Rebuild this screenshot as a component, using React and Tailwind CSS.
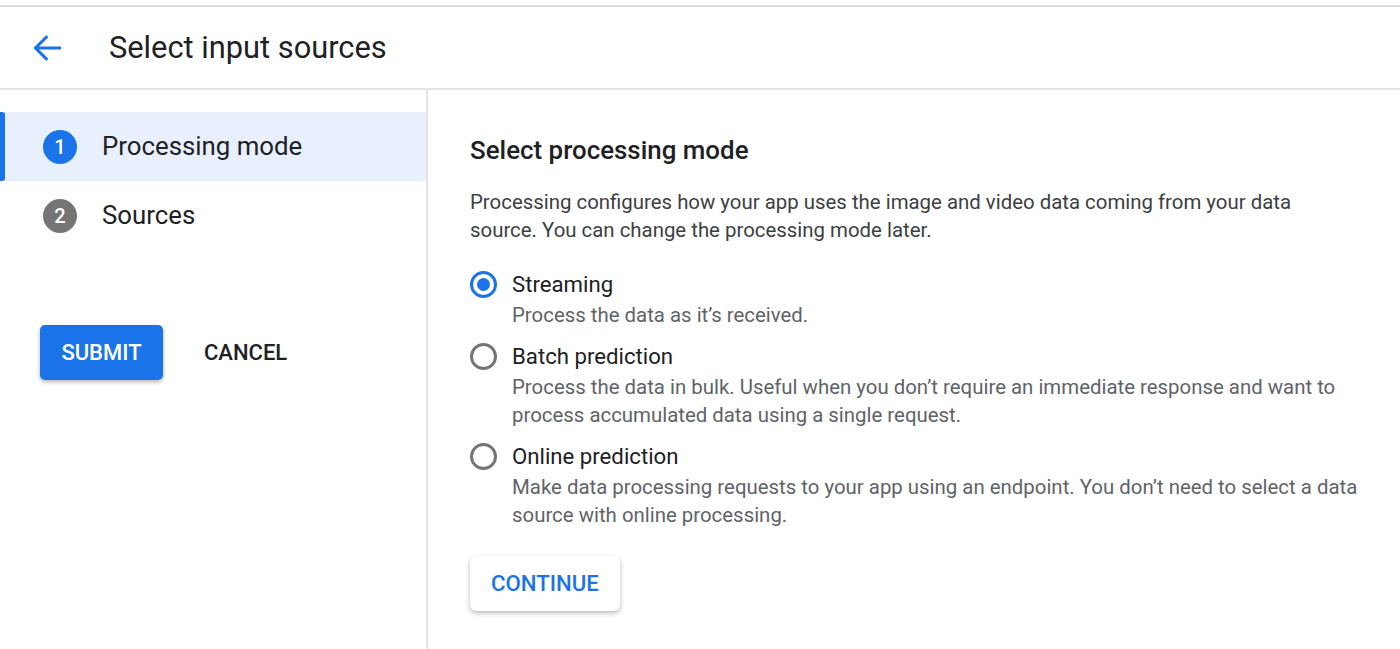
import React, { useState } from "react";

const modes = [
  {
    id: "streaming",
    label: "Streaming",
    desc: "Process the data as it’s received.",
  },
  {
    id: "batch",
    label: "Batch prediction",
    desc: "Process the data in bulk. Useful when you don’t require an immediate response and want to process accumulated data using a single request.",
  },
  {
    id: "online",
    label: "Online prediction",
    desc: "Make data processing requests to your app using an endpoint. You don’t need to select a data source with online processing.",
  },
];

function Step({ n, label, active }) {
  return (
    <div
      className={`relative flex h-[69px] items-center pl-[43px] ${
        active ? "bg-[#e8f0fe]" : ""
      }`}
    >
      {active && (
        <span className="absolute left-0 top-0 h-full w-[5px] rounded-r-[3px] bg-[#1a73e8]" />
      )}
      <span
        className={`flex h-[34px] w-[34px] items-center justify-center rounded-full text-[20px] font-medium text-white ${
          active ? "bg-[#1a73e8]" : "bg-[#757575]"
        }`}
      >
        {n}
      </span>
      <span className="ml-[25px] text-[25.8px] text-[#202124]">{label}</span>
    </div>
  );
}

export default function App() {
  const [mode, setMode] = useState("streaming");

  return (
    <div className="h-[649px] w-[1400px] overflow-hidden bg-white font-['Roboto',sans-serif]">
      <div className="mt-[5px] border-t-2 border-[#dadce0]" />
      {/* header */}
      <div className="flex h-[83px] items-center border-b-2 border-[#e3e3e3]">
        <button className="ml-[26px] flex h-[42px] w-[42px] items-center justify-center text-[#1a73e8]">
          <svg width="42" height="42" viewBox="0 0 24 24" fill="none" stroke="currentColor" strokeWidth="1.7">
            <path d="M20 12H5.5M12.2 5.2 5.4 12l6.8 6.8" />
          </svg>
        </button>
        <h1 className="ml-[41px] mt-[2px] text-[30.8px] text-[#202124]">Select input sources</h1>
      </div>

      <div className="flex h-[559px]">
        {/* sidebar */}
        <div className="w-[428px] shrink-0 border-r-2 border-[#e3e3e3] pt-[22px]">
          <Step n="1" label="Processing mode" active />
          <Step n="2" label="Sources" />
          <div className="mt-[75px] flex items-center pl-[40px]">
            <button className="h-[55px] w-[123px] rounded-[5px] bg-[#1a73e8] text-[22px] font-medium text-white shadow-[0_2px_4px_rgba(0,0,0,0.3)]">
              SUBMIT
            </button>
            <button className="ml-[41px] text-[22px] font-medium text-[#202124]">
              CANCEL
            </button>
          </div>
        </div>

        {/* main */}
        <div className="w-[889px] pl-[42px] pt-[44px] box-content">
          <h2 className="text-[25.9px] font-medium leading-[32px] text-[#202124]">
            Select processing mode
          </h2>
          <p className="mt-[22px] text-[20.4px] leading-[28px] text-[#3c4043]">
            Processing configures how your app uses the image and video data coming from your data source. You can change the processing mode later.
          </p>

          <div className="mt-[26px] flex flex-col gap-[13px]">
            {modes.map((m) => {
              const on = mode === m.id;
              return (
                <label key={m.id} className="flex cursor-pointer items-start" onClick={() => setMode(m.id)}>
                  <span
                    className={`mt-[1px] flex h-[27px] w-[27px] shrink-0 items-center justify-center rounded-full border-[3px] ${
                      on ? "border-[#1a73e8]" : "border-[#757575]"
                    }`}
                  >
                    {on && <span className="h-[13px] w-[13px] rounded-full bg-[#1a73e8]" />}
                  </span>
                  <span className="ml-[15px] flex-1">
                    <span className="block text-[22.2px] leading-[28px] text-[#202124]">{m.label}</span>
                    <span className="mt-[3px] block text-[20.4px] leading-[28px] text-[#5f6368]">{m.desc}</span>
                  </span>
                </label>
              );
            })}
          </div>

          <button className="mt-[27px] h-[55px] w-[150px] rounded-[6px] bg-white text-[22.2px] font-medium text-[#1a73e8] shadow-[0_2px_5px_rgba(0,0,0,0.28)]">
            CONTINUE
          </button>
        </div>
      </div>
    </div>
  );
}
